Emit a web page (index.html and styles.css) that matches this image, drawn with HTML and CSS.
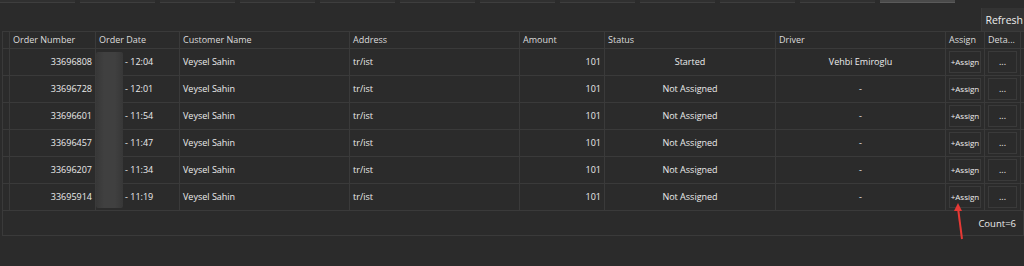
FILE: index.html
```html
<!DOCTYPE html>
<html lang="en">
<head>
    <meta charset="UTF-8">
    <meta name="viewport" content="width=device-width, initial-scale=1.0">
    <title>Orders</title>
    <link rel="stylesheet" href="styles.css">
</head>
<body>

    <!-- top tab strip (cut off) -->
    <div class="tabs">
        <span class="tab"></span><span class="tab"></span><span class="tab"></span>
        <span class="tab"></span><span class="tab"></span><span class="tab"></span>
        <span class="tab"></span><span class="tab"></span><span class="tab"></span>
        <span class="tab"></span><span class="tab"></span><span class="tab active"></span>
    </div>

    <div class="toolbar">
        <button class="refresh">Refresh</button>
    </div>

    <div class="grid-wrap">
        <table class="grid">
            <colgroup>
                <col class="c-rh"><col class="c-num"><col class="c-date"><col class="c-cust">
                <col class="c-addr"><col class="c-amt"><col class="c-status"><col class="c-driver">
                <col class="c-assign"><col class="c-det"><col class="c-pad">
            </colgroup>
            <thead>
                <tr>
                    <th></th>
                    <th>Order Number</th>
                    <th>Order Date</th>
                    <th>Customer Name</th>
                    <th>Address</th>
                    <th>Amount</th>
                    <th>Status</th>
                    <th>Driver</th>
                    <th>Assign</th>
                    <th>Deta...</th>
                    <th></th>
                </tr>
            </thead>
            <tbody id="rows"></tbody>
        </table>
        <div class="footer">Count=6</div>
        <!-- redacted dates -->
        <div class="blur"></div>
    </div>

    <svg class="arrow" width="20" height="44" viewBox="0 0 20 44">
        <line x1="9" y1="6" x2="13" y2="37" stroke="#e53935" stroke-width="2"/>
        <polygon points="9,1 5,9 13,9" fill="#e53935"/>
    </svg>

    <script>
        const orders = [
            ["33696808", "12:04", "Started", "Vehbi Emiroglu"],
            ["33696728", "12:01", "Not Assigned", "-"],
            ["33696601", "11:54", "Not Assigned", "-"],
            ["33696457", "11:47", "Not Assigned", "-"],
            ["33696207", "11:34", "Not Assigned", "-"],
            ["33695914", "11:19", "Not Assigned", "-"]
        ];

        let tbody = document.getElementById("rows");
        orders.forEach(o => {
            let row = tbody.insertRow();
            row.innerHTML =
                `<td></td>` +
                `<td class="right">${o[0]}</td>` +
                `<td class="date">- ${o[1]}</td>` +
                `<td>Veysel Sahin</td>` +
                `<td>tr/ist</td>` +
                `<td class="right">101</td>` +
                `<td class="center">${o[2]}</td>` +
                `<td class="center">${o[3]}</td>` +
                `<td class="btn-cell"><span class="assign">+Assign</span></td>` +
                `<td class="btn-cell"><span class="details">...</span></td>` +
                `<td></td>`;
        });
    </script>

</body>
</html>
```

FILE: styles.css
```css
body { margin: 0; background: #2b2b2b; color: #ececec; font-family: "Open Sans", "Noto Sans", sans-serif; font-size: 9px; position: relative; height: 266px; overflow: hidden; }

.tabs { display: flex; gap: 5px; height: 3px; overflow: hidden; }
.tab { width: 75px; height: 3px; background: #303030; border-bottom: 1px solid #3e3e3e; box-sizing: border-box; }
.tab.active { background: #4a4a4a; border-bottom-color: #5a5a5a; }

.toolbar { display: flex; justify-content: flex-end; height: 28px; padding-top: 5px; box-sizing: border-box; }
.refresh { height: 23px; padding: 0 1px 0 3px; background: #333; color: #ececec; border: none; border-left: 1px solid #3a3a3a; font-family: inherit; font-size: 10.5px; }

.grid-wrap { margin-left: 2px; position: relative; }
.grid { border-collapse: collapse; table-layout: fixed; width: 1022px; }
.grid th, .grid td { border: 1px solid #3a3a3a; padding: 0 3px; white-space: nowrap; overflow: hidden; line-height: 12px; }
.grid thead tr { height: 17px; }
.grid tbody tr { height: 27px; }
.grid th { text-align: left; font-weight: normal; color: #dcdcdc; }
.grid th:first-child, .grid td:first-child { padding: 0; }
.grid th:last-child, .grid td:last-child { border-right: none; padding: 0; }

.c-rh { width: 7px; }
.c-num { width: 86px; }
.c-date { width: 84px; }
.c-cust { width: 170px; }
.c-addr { width: 170px; }
.c-amt { width: 85px; }
.c-status { width: 171px; }
.c-driver { width: 170px; }
.c-assign { width: 39px; }
.c-det { width: 36px; }
.c-pad { width: 4px; }

.right { text-align: right; }
.center { text-align: center; }

.grid td.date { padding-left: 29px; }
.blur { position: absolute; left: 94px; top: 21px; width: 27px; height: 156px; background: linear-gradient(90deg, #373737, #404040 30%, #404040 70%, #373737); border-radius: 2px; }

.grid td.btn-cell { padding: 0 3px; }
.assign, .details { display: flex; align-items: center; justify-content: center; height: 22px; border: 1px solid #3a3a3a; box-sizing: border-box; }
.assign { font-size: 8px; }
.details { font-size: 9px; }

.footer { height: 24px; border: 1px solid #3a3a3a; border-top: none; display: flex; align-items: center; justify-content: flex-end; padding-right: 7px; font-size: 9.5px; }

.arrow { position: absolute; left: 949px; top: 202px; }
```
